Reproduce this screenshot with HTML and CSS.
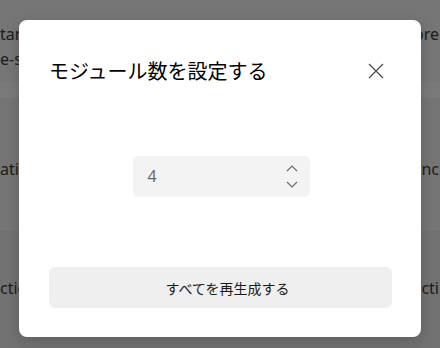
FILE: index.html
```html
<!DOCTYPE html>
<html lang="ja">
<head>
<meta charset="utf-8">
<link rel="stylesheet" href="styles.css">
</head>
<body>
<div class="page">
  <div class="row row-1">
    <div class="cell left"><div>tandard</div><div>e-sized</div></div>
    <div class="cell right"><div>ore</div></div>
  </div>
  <div class="band"></div>
  <div class="row row-2">
    <div class="cell left"><div>ation</div></div>
    <div class="cell right"><div>nc</div></div>
  </div>
  <div class="row row-3">
    <div class="cell left"><div>ction</div></div>
    <div class="cell right"><div>cti</div></div>
  </div>
</div>

<div class="dialog" role="dialog">
  <div class="header">
    <h1 class="title">モジュール数を設定する</h1>
    <button class="close" aria-label="閉じる">
      <svg width="16" height="16" viewBox="0 0 16 16"><path d="M1 1 L15 15 M15 1 L1 15" stroke="#4a4a4a" stroke-width="1.3" fill="none"/></svg>
    </button>
  </div>
  <div class="body">
    <div class="number">
      <span class="value">4</span>
      <span class="spin">
        <svg width="12" height="24" viewBox="0 0 12 24"><path d="M1 7 L6 2 L11 7" stroke="#6a6a6a" stroke-width="1.2" fill="none"/><path d="M1 18 L6 23 L11 18" stroke="#6a6a6a" stroke-width="1.2" fill="none"/></svg>
      </span>
    </div>
  </div>
  <button class="action">すべてを再生成する</button>
</div>
</body>
</html>
```

FILE: styles.css
```css
html, body {
  margin: 0;
  padding: 0;
  width: 440px;
  height: 348px;
  overflow: hidden;
}
body {
  background: #747474;
  font-family: "Noto Sans", "Noto Sans CJK JP", sans-serif;
}
.page {
  display: flex;
  flex-direction: column;
  height: 348px;
  color: #1c1c1c;
  font-size: 16px;
}
.row {
  display: flex;
  justify-content: space-between;
  padding-right: 1px;
}
.row-1 {
  height: 82px;
  background: #767676;
  align-items: flex-start;
  padding-top: 22px;
  box-sizing: border-box;
}
.band {
  height: 16px;
  background: #7a7a7a;
  border-bottom: 1px solid #727272;
}
.row-2 {
  height: 131px;
  background: #757575;
  align-items: center;
  padding-top: 10px;
  box-sizing: border-box;
  border-bottom: 1px solid #797979;
}
.row-3 {
  flex: 1;
  background: #727272;
  align-items: center;
  padding-bottom: 2px;
}
.cell {
  line-height: 25px;
  white-space: nowrap;
}
.left {
  width: 40px;
}
.dialog {
  position: absolute;
  left: 19px;
  top: 20px;
  width: 402px;
  height: 317px;
  background: #ffffff;
  border-radius: 8px;
  box-shadow: 0 4px 14px rgba(0, 0, 0, 0.18);
  display: flex;
  flex-direction: column;
  padding: 37px 29px 29px 30px;
  box-sizing: border-box;
}
.header {
  display: flex;
  align-items: center;
  justify-content: space-between;
  height: 28px;
}
.title {
  margin: 0;
  font-family: "Noto Sans CJK JP", sans-serif;
  font-size: 20px;
  font-weight: 400;
  line-height: 28px;
  color: #000;
}
.close {
  border: 0;
  background: none;
  padding: 0;
  width: 16px;
  height: 16px;
  margin-right: 8px;
  display: flex;
}
.body {
  flex: 1;
  display: flex;
  align-items: center;
  justify-content: center;
}
.number {
  width: 177px;
  height: 41px;
  margin-left: 1px;
  background: #f3f3f3;
  border-radius: 5px;
  display: flex;
  align-items: center;
  justify-content: space-between;
  padding: 0 12px 0 15px;
  box-sizing: border-box;
}
.value {
  font-family: "Noto Sans", sans-serif;
  font-size: 16px;
  color: #6a6a6a;
}
.spin {
  display: flex;
}
.action {
  height: 41px;
  width: 343px;
  border: 0;
  border-radius: 6px;
  background: #efefef;
  font-family: "Noto Sans CJK JP", sans-serif;
  font-size: 14px;
  color: #1a1a1a;
  padding: 0 0 0 14px;
}
```
